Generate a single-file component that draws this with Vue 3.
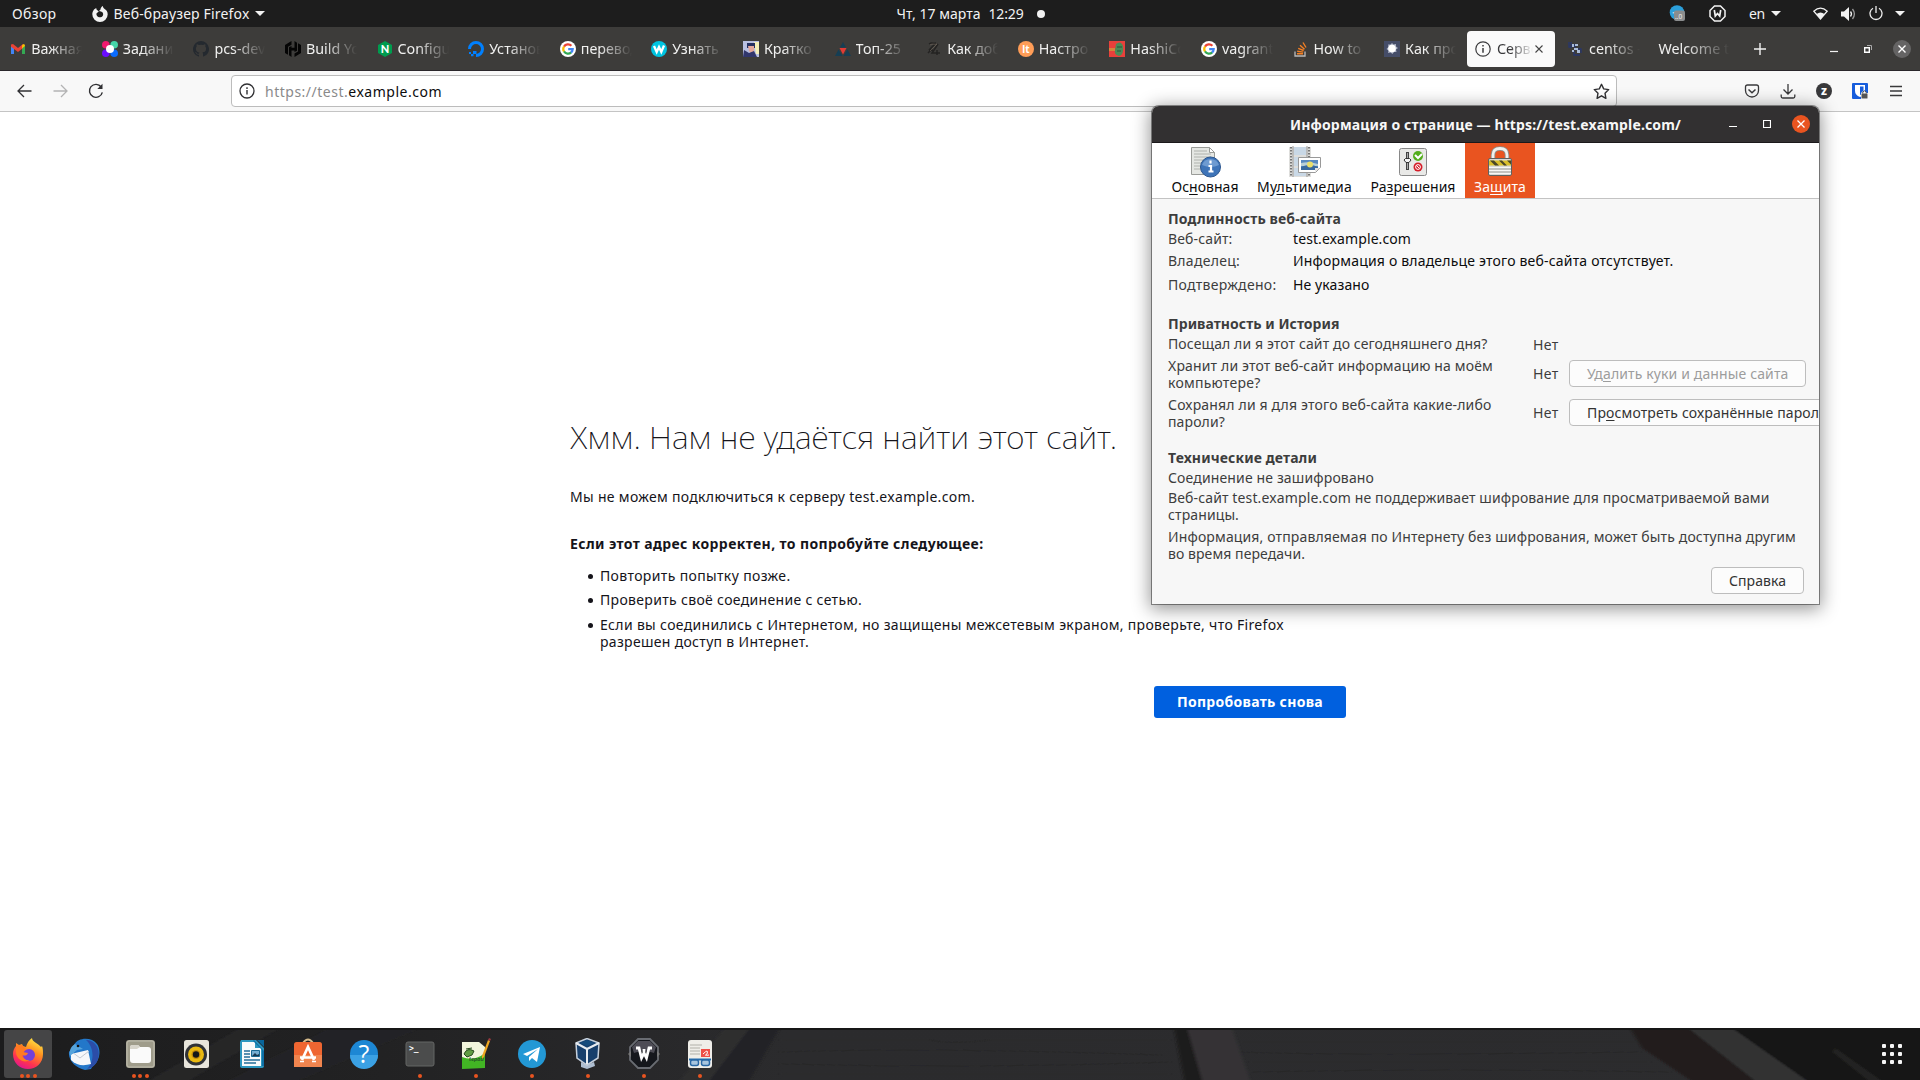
<script setup>
// Stretches or tightens a label's tracking so that it takes the given width.
const vFit = {
  mounted(el, { value }) {
    const natural = el.getBoundingClientRect().width
    const count = el.textContent.length
    if (value && count > 1) el.style.letterSpacing = (value - natural) / count + 'px'
  },
}

const google = `<circle cx="8" cy="8" r="8" fill="#fff"/><g fill="none" stroke-width="2.2"><path d="M4 5.6A4.7 4.7 0 0 1 11.400 4.700" stroke="#ea4335"/><path d="M4 5.500A4.700 4.700 0 0 0 4 10.500" stroke="#fbbc05"/><path d="M4 10.400A4.700 4.700 0 0 0 11.200 11.400" stroke="#34a853"/><path d="M11 11.500A4.700 4.700 0 0 0 12.700 8.100H8.200" stroke="#4285f4"/></g>`

const tabs = [
  { t: 'Важная', i: `<path d="M1 4v9h3V6z" fill="#4285f4"/><path d="M12 6v7h3V4z" fill="#34a853"/><path d="M1 3.500 3 3l5 4 5-4v4L8 11 1 5.800z" fill="#ea4335"/><path d="M12 4.200 13.500 3Q15 3 15 5l-3 2.500z" fill="#fbbc04"/>` },
  { t: 'Задани', i: `<circle cx="3.800" cy="3.800" r="3.800" fill="#f0196e"/><circle cx="12.200" cy="3.800" r="3.800" fill="#45d6a8"/><circle cx="3.800" cy="12.200" r="3.800" fill="#6a0dff"/><circle cx="12.200" cy="12.200" r="3.800" fill="#0a6cff"/><circle cx="8" cy="8" r="4" fill="#fff"/>` },
  { t: 'pcs-dev', i: `<path d="M8 0a8 8 0 0 0-2.500 15.600c.4.100.5-.2.500-.4v-1.500c-2.200.5-2.700-.9-2.700-.9-.4-.9-.9-1.200-.9-1.200-.7-.5.100-.5.100-.5.800.1 1.200.8 1.200.8.700 1.200 1.900.9 2.300.7.100-.5.300-.9.500-1.100-1.800-.2-3.600-.9-3.600-4 0-.9.300-1.600.8-2.100-.1-.2-.4-1 .1-2.100 0 0 .7-.2 2.200.8a7.600 7.600 0 0 1 4 0c1.500-1 2.200-.8 2.200-.8.500 1.100.2 1.900.1 2.100.500.500.800 1.200.800 2.100 0 3.100-1.900 3.700-3.700 3.900.300.300.600.800.600 1.500v2.300c0 .2.100.5.500.4A8 8 0 0 0 8 0z" fill="#24292f"/>` },
  { t: 'Build Yo', i: `<path d="M6.500 0 0 4v8l3 1.800V5.700l3.500-2zM9.500 0v6.700h-3V5L4 6.300v8L6.500 16V9.500h3V11l2.500-1.300v-8zM13 2.200v8.200l-3.500 2V16L16 12V4z" fill="#050505"/>` },
  { t: 'Configu', i: `<path d="M8 0 15 4v8l-7 4-7-4V4z" fill="#009c4f"/><text x="8" y="12" text-anchor="middle" font-family="Lato" font-weight="900" font-size="11" fill="#fff">N</text>` },
  { t: 'Установ', i: `<path d="M1.500 8A6.500 6.500 0 1 1 8 14.500" fill="none" stroke="#0080ff" stroke-width="3"/><path d="M5 10h3.500v3H5zM3 13h2.500v2.300H3zM1 11h2v2H1z" fill="#0080ff"/>` },
  { t: 'перевод', i: google },
  { t: 'Узнать', i: `<circle cx="8" cy="8" r="8" fill="#00c4e0"/><path d="m3 5 2.700 6L8 6l2.300 5L13 4.500" fill="none" stroke="#fff" stroke-width="2.300"/>` },
  { t: 'Кратко', i: `<path d="M0 0h16v16H0z" fill="#b8bfe0"/><path d="M11 1h5v12h-3z" fill="#f4eeb7"/><path d="M4 2h8v5H4z" fill="#25305f"/><path d="M5 5h6v6l-2 2-3-3z" fill="#e4a89b"/><path d="M0 16 1 9l5 3 5-2 3 6z" fill="#31366c"/>` },
  { t: 'Топ-25', i: `<path d="m8 1 3 5.500H5zM3.500 8.500 7.500 15H0zM12.500 8.500 16 15H8.500z" fill="#153e54"/><path d="M4.500 7h7L8 13.500z" fill="#e13b35"/>` },
  { t: 'Как доба', i: `<path d="M3 3c3-2 4 0 7-1L3 9c3-1 3 0 4 1M12 3 6 12h8M11 9v5M2 12l3-3" fill="none" stroke="#242322" stroke-width="1.500"/><path d="M4 4c3-2 4 0 7-1L4 10" fill="none" stroke="#776c60" stroke-width=".6"/>` },
  { t: 'Настро', i: `<circle cx="8" cy="8" r="8" fill="#ff9d57"/><text x="8" y="12" text-anchor="middle" font-family="Noto Sans" font-weight="700" font-size="10" fill="#fff">lt</text>` },
  { t: 'HashiCo', i: `<path d="M0 0h16v16H0z" fill="#e9403b"/><path d="M7 3q5-4 7 2 1 9-4 10-5-1-4-6z" fill="#4c8a57"/><path d="M0 7h6v3H0z" fill="#d3853b"/><path d="M8 6h5M8 10h4" stroke="#28523c"/>` },
  { t: 'vagrant', i: google },
  { t: 'How to', i: `<path d="M2 10.500V15h10v-4.500" fill="none" stroke="#bcbbbb" stroke-width="1.300"/><path d="M4 12.800h6M4.200 10.300l6 .8M5.200 7.300l5.500 2.200M7 4.300l4.500 4M10 1.500l3 5" stroke="#f48024" stroke-width="1.400"/>` },
  { t: 'Как про', i: `<path d="M0 0h16v16H0z" fill="#454d68"/><path d="m8 2 1.500 1.500L12 3l0 2.500 2 1.500-2 1.500.5 2.500-2.500 0-1.500 2-2-1.500-2.500.5.500-2.500-2-1.500 2-2L4 3.500l2.500 0z" fill="#aeb4c6"/><circle cx="8" cy="7.500" r="3.800" fill="#fff"/>` },
  { t: 'Сервер', active: true, i: `<circle cx="8" cy="8" r="7.200" fill="none" stroke="#3b3b3d" stroke-width="1.200"/><path d="M8 7v4.800M8 4v1.600" stroke="#3b3b3d" stroke-width="1.500"/>` },
  { t: 'centos -', i: `<path d="M1 1v5h3M3 1v3h4v4M6 10v4h6M9 8h4v4" fill="none" stroke="#27366e" stroke-width="1.300"/><path d="M4 3h2v3H4zM7 3h3v2H7zM6 7h4v2H6zM9 9h3v3H9zM4 9h2v2H4z" fill="#a9bbd8"/>` },
  { t: 'Welcome to' },
]

const apps = [
  { dots: 3, active: true, i: `<defs><linearGradient id="fx" x1=".8" y1="0" x2=".3" y2="1"><stop offset="0" stop-color="#fff04a"/><stop offset=".4" stop-color="#ff8f1f"/><stop offset=".75" stop-color="#ff3350"/><stop offset="1" stop-color="#e01690"/></linearGradient></defs><path d="M16 31C8 31 1 25 1 16c0-3 1-6 3-8V5l3 2 3-1 1 2 3 1c1-4 3-7 6-9 0 4 6 5 9 9l1-1c1 2 1 6 1 8 0 9-7 15-15 15z" fill="url(#fx)"/><circle cx="17" cy="17" r="6" fill="#7440d8"/><path d="M4 8l6-1 4 4-3 3 5 1c-1 3-4 3-6 2 1 4 5 6 8 5-6 4-14-1-14-8z" fill="#ff7a22"/>` },
  { dots: 0, i: `<path d="M6 7C10-1 24-1 29 6c5 7 2 18-5 23l-1 2-6 1C8 30 0 23 1 14z" fill="#2377c9"/><path d="M18 2c9 0 15 9 12 19-1 5-6 9-11 10 7-6 8-21-1-29z" fill="#2b4da8"/><path d="m3 16 17-4 3 14c-7 2-14 2-20-4z" fill="#f5f7fa"/><path d="m4 14 8 6 9-7" fill="none" stroke="#c3c9d2"/><path d="M7 6C2 9 1 14 2 18l7-6 6-1z" fill="#55a4dd"/><circle cx="10" cy="8" r="1.300" fill="#111"/>` },
  { dots: 3, i: `<rect x="2" y="2" width="29" height="28" rx="3" fill="#9f9c8b"/><rect x="3" y="3" width="27" height="26" rx="2" fill="none" stroke="#c0beb0"/><path d="M6 10q0-3 3-3h5l2 2h8q3 0 3 3v10q0 3-3 3H9q-3 0-3-3z" fill="#fafafa"/><path d="M6 11V9q0-2 2-2h6l2 2-3 2z" fill="#d8d5cc"/>` },
  { dots: 0, i: `<rect x="4" y="2" width="25" height="28" rx="2.500" fill="#e8e5dc"/><circle cx="16" cy="16.500" r="11" fill="#303236"/><circle cx="16" cy="16.500" r="8" fill="#eab911"/><circle cx="16" cy="16.500" r="4.500" fill="#c58c0b"/><circle cx="16" cy="16.500" r="3.200" fill="#15171a"/>` },
  { dots: 0, i: `<path d="M5 2h15l8 8v18q0 2-2 2H6q-2 0-2-2V4z" fill="#2c96bf"/><path d="M6 4h13v6h6v18H6z" fill="#f8fafb"/><path d="M21 2h7v7z" fill="#09659a"/><path d="m18 2 10 11v15H26V12L17 3z" fill="#0e6fa5"/><path d="M8 13h6M8 16h6M8 19h6M8 22h16M8 25h12" stroke="#236e99" stroke-width="1.300"/><path d="M15.500 12.500h8v6h-8z" fill="#74acd0" stroke="#176792"/><path d="m16 18 3-3 2 2 2-1v2z" fill="#17374f"/>` },
  { dots: 0, i: `<path d="M11 7V5q5-7 10 0v2" fill="none" stroke="#d7bc8c" stroke-width="2"/><rect x="2" y="4" width="28" height="25" rx="2.500" fill="#ef6631"/><path d="M2 17h28v12H2z" fill="#f1854f"/><path d="m10 22 6-13 6 13M8 19.500h16" fill="none" stroke="#fff" stroke-width="2.700"/><path d="M8 23.500h4M20 23.500h4" stroke="#fff" stroke-width="1.500"/>` },
  { dots: 0, i: `<circle cx="16" cy="16" r="14" fill="#1d87d4"/><path d="M2 17h28a14 14 0 0 1-28 0z" fill="#3ba1e4"/><text x="16" y="25" text-anchor="middle" font-family="Open Sans" font-size="25" fill="#fff">?</text>` },
  { dots: 1, i: `<rect x="2" y="4" width="28" height="24" rx="2" fill="#4b4c4c" stroke="#656665" stroke-width="1"/><text x="5" y="13" font-family="DejaVu Sans Mono" font-size="8" font-weight="700" fill="#fff">&gt;_</text>` },
  { dots: 1, i: `<path d="M2 4h17l6 5v21H2z" fill="#f2f5dc"/><path d="M2 19q12 5 23-4v15L2 31z" fill="#42b524"/><path d="M4 16q3-7 10-3l-2 4-5 2zM6 11l6-1" fill="#619d43" stroke="#254a1d"/><text x="9" y="23" font-size="6" font-family="Lato" font-style="italic" font-weight="700" fill="#245525">tepad</text><path d="m22 18 6-16 2 1-6 16-2 2z" fill="#efa620"/><path d="m28 2 1-2 2 1-1 2z" fill="#9f3b40"/>` },
  { dots: 1, i: `<circle cx="16" cy="16" r="14" fill="#2398d5"/><path d="m7 16 17-7-3 15-5-4-3 3v-4l9-8-11 7z" fill="#fff"/>` },
  { dots: 1, i: `<path d="m9 24 6 3 7-3 1 4-8 3-6-2z" fill="#aebed1"/><path d="m4 5 11-4.500L27 5l-1 15-11 7L5 20z" fill="#173f6c" stroke="#c6d0dc" stroke-width="1.500"/><path d="m4 5 11 6 12-6M15 11v15" fill="none" stroke="#e8ecf0" stroke-width="2"/><path d="M8 5l7-3 8 3-8 3z" fill="#164b7b"/>` },
  { dots: 1, i: `<path d="M10 1h12l8 8v13l-8 8H10l-8-8V9z" fill="#15171c" stroke="#696c72" stroke-width="1.800"/><path d="M10 3h12l6 6-2 6-10-3-10 3-2-6z" fill="#4d4c55"/><path d="M8 10h3l2.500 10L16 15l2.500 5L21 10h3M16 11v4" fill="none" stroke="#fff" stroke-width="2.800"/><path d="m0 16 3-3v6zM32 16l-3-3v6z" fill="#777"/>` },
  { dots: 1, i: `<rect x="4" y="2" width="24" height="28" rx="3" fill="#efeee9"/><path d="M6 7h12M6 10h10M6 13h10M6 16h10" stroke="#b1b0a9"/><path d="M17 11h9v8h-9z" fill="#ee5048"/><path d="M19 16q6-6 4 0-4 2 2 1" fill="none" stroke="#fff"/><path d="M5 21.500h22" stroke="#226cae" stroke-width="2"/><rect x="6.500" y="22" width="8" height="5.500" rx="2" fill="#a7c5df" stroke="#2968a5" stroke-width="1.500"/><rect x="17.500" y="22" width="8" height="5.500" rx="2" fill="#a7c5df" stroke="#2968a5" stroke-width="1.500"/>` },
]
</script>

<template>
  <div class="screen">
    <header class="panel">
      <span v-fit="44.500" class="overview">Обзор</span>
      <svg class="pfx" width="16" height="16" viewBox="0 0 16 16"><path d="M2 3.500C1 5 .3 6.500.3 8.300A7.700 7.700 0 0 0 15.700 8.300C15.700 5.500 14 3.500 12.600 3 11.500 2 10.700 1 11 0 9.500.5 8.500 2 8.500 3.500L7 5l2 .5C12 6 12 11 8.500 11.300 5.500 11.500 4 9.200 4.600 7.300L6.800 5.500 4.500 3.500 4.200 2z" fill="#f2f2f2"/></svg>
      <span v-fit="136" class="appname">Веб-браузер Firefox</span>
      <i class="caret c1"></i>
      <span class="clock"><span v-fit="84">Чт, 17 марта</span><span v-fit="35">12:29</span><i></i></span>
      <div class="status">
        <svg width="17" height="17" viewBox="0 0 17 17"><circle cx="8" cy="7.500" r="7.300" fill="#2b9fda"/><path d="m3 8 5-2v3z" fill="#fff"/><rect x="5" y="5.500" width="11" height="10.500" rx="2" fill="#8b8d8e"/><text x="6" y="13.500" font-family="Noto Sans" font-size="6.500" fill="#eee">..0</text></svg>
        <svg class="s2" width="17" height="17" viewBox="0 0 17 17"><path d="M5.500 1h6l4.500 4.500v6L11.500 16h-6L1 11.500v-6z" fill="none" stroke="#f2f2f2" stroke-width="1.500"/><path d="m5.300 5 1 6L8.500 8.500l2.200 2.500 1-6" fill="none" stroke="#f2f2f2" stroke-width="1.700"/></svg>
        <span v-fit="16" class="lang">en</span><i class="caret c2"></i>
        <svg class="s3" width="15" height="13" viewBox="0 0 15 13"><path d="M.8 4.200Q7.500-2 14.200 4.200L7.500 12z" fill="none" stroke="#f2f2f2" stroke-width="1.300"/><path d="M3.500 7q4-3 8 0l-4 5z" fill="#f2f2f2"/></svg>
        <svg class="s4" width="15" height="14" viewBox="0 0 15 14"><path d="M0 4.500h3L8 0v14L3 9.500H0z" fill="#f2f2f2"/><path d="M9.500 4.500q2 2.500 0 5" fill="none" stroke="#f2f2f2" stroke-width="1.300"/><path d="M11.500 2q3.800 5 0 10" fill="none" stroke="#999" stroke-width="1.300"/></svg>
        <svg class="s5" width="14" height="15" viewBox="0 0 14 15"><path d="M4 2.300a6 6 0 1 0 6 0M7 0v7" fill="none" stroke="#eee" stroke-width="1.300"/></svg>
        <i class="caret c3"></i>
      </div>
    </header>

    <nav class="tabs">
      <div v-for="(tab, n) in tabs" :key="n" class="tab" :class="{ active: tab.active, bare: !tab.i }">
        <svg v-if="tab.i" width="16" height="16" viewBox="0 0 16 16" v-html="tab.i"></svg>
        <span class="label">{{ tab.t }}</span>
        <svg v-if="tab.active" class="x" width="8" height="8" viewBox="0 0 8 8"><path d="m.5.5 7 7m0-7-7 7" stroke="#444" stroke-width="1.100"/></svg>
      </div>
      <svg class="plus" width="12" height="12" viewBox="0 0 12 12"><path d="M6 0v12M0 6h12" stroke="#f2f2f2" stroke-width="1.400"/></svg>
      <div class="winbtns">
        <svg width="8" height="8" viewBox="0 0 8 8"><path d="M0 6.500h8" stroke="#f2f2f2" stroke-width="1.200"/></svg>
        <svg width="8" height="8" viewBox="0 0 8 8"><path d="M.7 2.700h4.600v4.600H.7z" fill="none" stroke="#fff" stroke-width="1.400"/><path d="M3 .5h4.500V5" fill="none" stroke="#aaa"/></svg>
        <svg width="18" height="18" viewBox="0 0 18 18"><circle cx="9" cy="9" r="9" fill="#656464"/><path d="m5.500 5.500 7 7m0-7-7 7" stroke="#fff" stroke-width="1.400"/></svg>
      </div>
    </nav>

    <div class="toolbar">
      <svg class="back" width="15" height="14" viewBox="0 0 15 14"><path d="M14.500 7H1.500M7 1 1 7l6 6" fill="none" stroke="#303033" stroke-width="1.300"/></svg>
      <svg class="fwd" width="15" height="14" viewBox="0 0 15 14"><path d="M.5 7h13M8 1l6 6-6 6" fill="none" stroke="#b3b3b4" stroke-width="1.300"/></svg>
      <svg class="reload" width="16" height="16" viewBox="0 0 16 16"><path d="M13.200 4A6.500 6.500 0 1 0 14.300 9.300" fill="none" stroke="#303033" stroke-width="1.400"/><path d="M14.500.8V6H9.300z" fill="#303033"/></svg>
      <div class="url">
        <svg width="16" height="16" viewBox="0 0 16 16"><circle cx="8" cy="8" r="7" fill="none" stroke="#303033" stroke-width="1.300"/><path d="M8 7v4.500M8 4.300V6" stroke="#303033" stroke-width="1.400"/></svg>
        <span v-fit="177" class="addr"><em>https://test.</em>example.com</span>
        <svg class="star" width="17" height="17" viewBox="0 0 17 17"><path d="m8.500 1.300 2.200 4.600 5 .7L12 10.200l.9 5.100-4.400-2.500-4.400 2.500.9-5.100L1.300 6.600l5-.7z" fill="none" stroke="#303033" stroke-width="1.400" stroke-linejoin="round"/></svg>
      </div>
      <div class="tools">
        <svg width="16" height="16" viewBox="0 0 16 16"><path d="M1.500 4q0-2 2-2h9q2 0 2 2v3.500a6.500 6.500 0 0 1-13 0z" fill="none" stroke="#39393b" stroke-width="1.300"/><path d="m4.500 6.500 3.500 3.300 3.500-3.300" fill="none" stroke="#39393b" stroke-width="1.500"/></svg>
        <svg width="16" height="16" viewBox="0 0 16 16"><path d="M8 1v9.500M3.500 6.500 8 11l4.500-4.500M1.200 11.500v2q0 1.500 1.500 1.500h10.600q1.500 0 1.500-1.500v-2" fill="none" stroke="#39393b" stroke-width="1.300"/></svg>
        <svg width="16" height="16" viewBox="0 0 16 16"><circle cx="8" cy="8" r="8" fill="#39393b"/><text x="8" y="12" text-anchor="middle" font-family="Noto Sans" font-weight="800" font-size="12" fill="#fff">z</text></svg>
        <svg width="16" height="16" viewBox="0 0 16 16"><rect width="16" height="16" rx="1" fill="#175ddc"/><path d="M3 2h10v6q0 4-5 6-5-2-5-6z" fill="#fff"/><path d="M8 3.500h3.500V8q0 2.500-3.500 4z" fill="#175ddc"/><path d="M9 16V10q3-4 6 0h1v6z" fill="#fff"/><rect x="9.500" y="10.500" width="6" height="5" fill="#555"/><path d="M10.800 10.500V9q1.700-2.500 3.400 0v1.500" fill="none" stroke="#555"/></svg>
        <svg width="16" height="16" viewBox="0 0 16 16"><path d="M2 3.500h12M2 8h12M2 12.500h12" stroke="#39393b" stroke-width="1.300"/></svg>
      </div>
    </div>

    <main class="page">
      <h1><span v-fit="547">Хмм. Нам не удаётся найти этот сайт.</span></h1>
      <p class="p1"><span v-fit="405">Мы не можем подключиться к серверу test.example.com.</span></p>
      <p class="p2"><span v-fit="413.5">Если этот адрес корректен, то попробуйте следующее:</span></p>
      <ul>
        <li><span v-fit="190.500">Повторить попытку позже.</span></li>
        <li><span v-fit="262">Проверить своё соединение с сетью.</span></li>
        <li><span v-fit="684">Если вы соединились с Интернетом, но защищены межсетевым экраном, проверьте, что Firefox</span><br><span v-fit="209">разрешен доступ в Интернет.</span></li>
      </ul>
      <button class="retry"><span v-fit="146">Попробовать снова</span></button>
    </main>

    <footer class="dock">
      <svg class="wood" width="1920" height="52" viewBox="0 0 1920 52" preserveAspectRatio="none">
        <defs>
          <linearGradient id="wd" x1="0" x2="1"><stop offset="0" stop-color="#1c1c1d"/><stop offset=".2" stop-color="#222223"/><stop offset=".36" stop-color="#29292b"/><stop offset=".41" stop-color="#2b2b2d"/><stop offset="1" stop-color="#2c2c2e"/></linearGradient>
          <filter id="soft" x="-5%" y="-20%" width="110%" height="140%"><feGaussianBlur stdDeviation="1.600 .6"/></filter>
        </defs>
        <path d="M0 0h1920v52H0z" fill="url(#wd)"/>
        <g filter="url(#soft)">
          <path d="M150 52 240 0h40L190 52z" fill="#252527"/><path d="M230 52 330 0h90L300 52z" fill="#242426"/>
          <path d="M680 52 725 0h25L710 52z" fill="#2d2d2f"/><path d="M710 52 750 0h30L750 52z" fill="#242425"/>
          <g stroke="#282829" fill="none"><path d="M780 12h150q20 5 60 0h180M780 24q150-5 380 3M780 36q200 5 390-2M780 46h390M1240 14h400M1240 24q100 4 400 0M1250 34h400M1250 44q200-4 420 0"/></g>
          <path d="M1174 0h14l14 52h-18z" fill="#1f1d1c"/><path d="M1187 0h45l18 52h-48z" fill="#343335"/>
          <path d="M1630 0h60l70 52h-70L1642 20z" fill="#211f1d"/><path d="M1688 0h44l74 52h-52z" fill="#313132"/><path d="M1732 0h198v52H1806z" fill="#181817"/><path d="M1835 20 1880 52h-12l-35-28z" fill="#222221"/>
        </g>
        <path d="M0 0h1920v2H0z" fill="#171717"/>
      </svg>
      <div class="apps">
        <div v-for="(app, n) in apps" :key="n" class="app" :class="{ on: app.active }">
          <svg width="32" height="32" viewBox="0 0 32 32" v-html="app.i"></svg>
          <span class="dots"><i v-for="d in app.dots" :key="d"></i></span>
        </div>
      </div>
      <div class="grid"><i v-for="n in 9" :key="n"></i></div>
    </footer>

    <section class="dialog">
      <div class="title">
        <span v-fit="391">Информация о странице — https://test.example.com/</span>
        <div class="dbtns">
          <svg width="8" height="8" viewBox="0 0 8 8"><path d="M0 6.500h8" stroke="#fff" stroke-width="1.200"/></svg>
          <svg width="8" height="8" viewBox="0 0 8 8"><path d="M.5.5h7v7h-7z" fill="none" stroke="#fff" stroke-width="1.200"/></svg>
          <svg width="18" height="18" viewBox="0 0 18 18"><circle cx="9" cy="9" r="9" fill="#e95420"/><path d="m5.500 5.500 7 7m0-7-7 7" stroke="#fff" stroke-width="1.300"/></svg>
        </div>
      </div>
      <div class="dtabs">
        <div class="dtab d1">
          <svg width="32" height="32" viewBox="0 0 32 32"><path d="M2.500 1.500h18l5 5v22h-23z" fill="#e5e7e3" stroke="#9a9c98"/><path d="M20.500 1.500v5h5z" fill="#fff" stroke="#9a9c98"/><path d="M5 5h13M5 8h17M5 11h17M5 14h15M5 17h10M5 20h8M5 23h8" stroke="#afb2ad"/><circle cx="21.500" cy="21" r="10" fill="#3e74b8" stroke="#2b568f"/><path d="M13 19a9 9 0 0 1 17 0q-8 4-17 0z" fill="#6e9bd1"/><path d="M21.500 17.500v-3M19.500 20h2.500v5.500M19.500 25.500h5" fill="none" stroke="#fff" stroke-width="2.200"/></svg>
          <span v-fit="67">Ос<u>н</u>овная</span>
        </div>
        <div class="dtab d2">
          <svg width="32" height="32" viewBox="0 0 32 32"><path d="M0 1h22v30H0z" fill="#dededc"/><path d="M5 1h12v8H5zM5 11h12v9H5zM5 22h12v8H5z" fill="#c9d8e6"/><path d="M2 1v30M20 1v30" stroke="#777" stroke-width="2" stroke-dasharray="1.500 1.500"/><path d="M4 0v31M18 0v31" stroke="#999"/><path d="M9.500 11.500h22v10l-5 5h-17z" fill="#fff" stroke="#999"/><path d="M12 14h17v8l-2 2H12z" fill="#5789c0"/><path d="M12 17q8-2 17 1v2H12z" fill="#b9d0d6"/><path d="M12 21q9-4 17 0v1l-2 2H12z" fill="#38699e"/><circle cx="21" cy="18.500" r="3" fill="#eadf6b"/><path d="m31 22-5 4v-4z" fill="#e2e2e2"/></svg>
          <span v-fit="95">Му<u>л</u>ьтимедиа</span>
        </div>
        <div class="dtab d3">
          <svg width="32" height="32" viewBox="0 0 32 32"><rect x="2.500" y="2.500" width="27" height="27" rx="2" fill="#e9e9e7" stroke="#888"/><path d="M10.500 6v18" stroke="#444" stroke-width="3"/><path d="M10.500 7v16" stroke="#aaa"/><path d="m7 14 1.500-1.500h4L14 14l-2 2.500H9z" fill="#f5f5f5" stroke="#333"/><circle cx="21" cy="10" r="5" fill="#53ad1c"/><path d="m18 9 3 3 4-4" fill="none" stroke="#fff" stroke-width="2"/><circle cx="21" cy="21" r="4.500" fill="#d51d29"/><circle cx="21" cy="21" r="2.400" fill="none" stroke="#fff"/><path d="m19.500 19.500 3 3" stroke="#fff"/></svg>
          <span v-fit="85">Ра<u>з</u>решения</span>
        </div>
        <div class="dtab d4 on">
          <svg width="32" height="32" viewBox="0 0 32 32"><path d="M9 14v-5q0-6.500 7-6.500T23 9v5" fill="none" stroke="#8d8d89" stroke-width="4.500"/><path d="M9 14v-5q0-6.500 7-6.500T23 9v5" fill="none" stroke="#f1f1ed" stroke-width="2.800"/><rect x="4.500" y="12.500" width="23" height="17" rx="1.500" fill="#d9d9d5" stroke="#61615e"/><path d="M5 14.500h22v5H5z" fill="#d9bf2a"/><path d="m6 14.500 5 5h4l-5-5zM15 14.500l5 5h3l-5-5zM23 14.500l4 4v-4z" fill="#4a4726"/><path d="M5 21.500h22M5 24.500h22M5 27.500h22" stroke="#f7f7f5"/><path d="M5 23h22M5 26h22" stroke="#adada9"/></svg>
          <span v-fit="52">За<u>щ</u>ита</span>
        </div>
      </div>
      <div class="dbody">
        <h2><span v-fit="173">Подлинность веб-сайта</span></h2>
        <dl>
          <dt><span v-fit="64.500">Веб-сайт:</span></dt><dd><span v-fit="118">test.example.com</span></dd>
          <dt><span v-fit="72">Владелец:</span></dt><dd><span v-fit="380.500">Информация о владельце этого веб-сайта отсутствует.</span></dd>
          <dt><span v-fit="108.500">Подтверждено:</span></dt><dd><span v-fit="76.500">Не указано</span></dd>
        </dl>
        <h2 class="h2b"><span v-fit="171.500">Приватность и История</span></h2>
        <div class="q q1"><div class="qt"><span v-fit="319.500">Посещал ли я этот сайт до сегодняшнего дня?</span></div><span v-fit="25.500" class="no">Нет</span></div>
        <div class="q q2"><div class="qt"><span v-fit="325">Хранит ли этот веб-сайт информацию на моём</span><br><span v-fit="92.500">компьютере?</span></div><div class="qa"><span v-fit="25.500" class="no">Нет</span><button class="btn b1 off"><span v-fit="201.500">Уд<u>а</u>лить куки и данные сайта</span></button></div></div>
        <div class="q q3"><div class="qt"><span v-fit="323.500">Сохранял ли я для этого веб-сайта какие-либо</span><br><span v-fit="57">пароли?</span></div><div class="qa"><span v-fit="25.500" class="no">Нет</span><button class="btn b2"><span v-fit="241">Пр<u>о</u>смотреть сохранённые пароли</span></button></div></div>
        <h2><span v-fit="149">Технические детали</span></h2>
        <p class="t1"><span v-fit="206">Соединение не зашифровано</span></p>
        <p class="t2"><span v-fit="601.500">Веб-сайт test.example.com не поддерживает шифрование для просматриваемой вами</span><br><span v-fit="71">страницы.</span></p>
        <p class="t3"><span v-fit="628">Информация, отправляемая по Интернету без шифрования, может быть доступна другим</span><br><span v-fit="137">во время передачи.</span></p>
        <div class="help"><button class="btn"><span v-fit="57">Справка</span></button></div>
      </div>
    </section>
  </div>
</template>

<style>
body { margin: 0; overflow: hidden; background: #fff; }
</style>

<style scoped>
.screen { position: relative; display: flex; flex-direction: column; width: 1920px; height: 1080px; overflow: hidden; background: #fff; font: 14px/17px "Noto Sans", "Open Sans", sans-serif; white-space: nowrap; }
.screen * { box-sizing: border-box; }
.screen svg { display: block; flex: none; }
span { display: inline-block; flex: none; }
h1, h2, p, ul, dl, dd { margin: 0; padding: 0; }
button { font: inherit; }
u { text-underline-offset: 2px; text-decoration-thickness: 1px; }

.panel { display: flex; align-items: center; flex: none; height: 27px; padding-left: 12px; background: #1d1d1d; color: #f2f2f2; }
.pfx { margin: 0 6px 0 35px; }
.caret { flex: none; border: 5px solid transparent; border-top-color: #f2f2f2; border-bottom: 0; }
.c1 { margin-left: 5px; }
.clock { display: flex; align-items: center; gap: 8px; margin-left: 632px; }
.clock i { width: 8px; height: 8px; margin-left: 5px; border-radius: 50%; background: #f2f2f2; }
.status { display: flex; align-items: center; margin: 0 15px 0 auto; }
.s2 { margin-left: 23px; }
.lang { margin-left: 23px; }
.c2 { margin-left: 6px; }
.s3 { margin-left: 32px; }
.s4 { margin-left: 13px; }
.s5 { margin-left: 13px; }
.c3 { margin-left: 12px; }

.tabs { display: flex; align-items: center; flex: none; height: 44px; border-bottom: 1px solid #2a272b; background: #3d3c3a; color: #f0f0ef; }
.tab { display: flex; align-items: center; flex: none; width: 91.600px; height: 36px; padding-left: 10.200px; }
.label { flex: none; width: 52px; margin-left: 5px; overflow: hidden; font-size: 14.300px; line-height: 22px; -webkit-mask-image: linear-gradient(90deg, #000 36%, transparent 98%); mask-image: linear-gradient(90deg, #000 36%, transparent 98%); }
.bare { padding-left: 9px; }
.bare .label { width: 73px; margin: 0; }
.tab.active { width: 88px; margin: 0 3px 0 1.400px; padding-left: 8px; border-radius: 4px; background: #fafafa; color: #39393b; }
.active .label { width: 37px; margin-left: 6px; }
.active .x { margin-left: 1px; }
.plus { margin-left: 12.500px; }
.winbtns { display: flex; align-items: center; margin: 0 9px 0 auto; gap: 26px; }
.winbtns svg:last-child { margin-left: -5px; }

.toolbar { display: flex; align-items: center; flex: none; height: 41px; padding-left: 17px; border-bottom: 1px solid #c4c4c4; background: #f8f8f8; }
.fwd { margin-left: 21px; }
.reload { margin-left: 20px; }
.url { display: flex; align-items: center; width: 1386px; height: 32px; margin-left: 127px; padding: 0 7px; border: 1px solid #bcbcbc; border-radius: 4px; background: #fff; }
.addr { margin-left: 10px; color: #0c0c0d; }
.addr em { font-style: normal; color: #8a8a8b; }
.star { margin: 0 -1px 0 auto; }
.tools { display: flex; gap: 20px; margin: 0 16px 0 auto; }

.page { display: flex; flex-direction: column; flex: 1; padding-left: 570px; color: #15141a; }
h1 { margin-top: 306px; font-size: 32px; line-height: 38px; font-weight: 200; }
.p1 { margin-top: 32px; }
.p2 { margin-top: 30px; font-weight: 700; }
ul { margin-top: 15px; padding-left: 30px; }
li { margin-bottom: 7px; list-style: none; }
li:nth-child(2) { margin-bottom: 8px; }
li::before { content: ""; float: left; width: 5px; height: 5px; margin: 7px 0 0 -12px; border-radius: 50%; background: #15141a; }
li span { vertical-align: top; }
.retry { width: 192px; height: 32px; margin: 28.500px 0 0 584px; padding: 0; border: 0; border-radius: 3px; background: #0060df; color: #fff; font-weight: 700; }

.dock { position: relative; display: flex; align-items: center; justify-content: space-between; flex: none; height: 52px; }
.wood { position: absolute; inset: 0; }
.apps { position: relative; display: flex; gap: 8px; margin-left: 4px; }
.app { display: flex; flex-direction: column; align-items: center; width: 48px; height: 48px; padding-top: 8px; border-radius: 3px; }
.app.on { background: #454546; }
.dots { display: flex; gap: 2.500px; margin-top: 4px; }
.dots i { width: 4px; height: 4px; border-radius: 50%; background: #e95420; }
.grid { position: relative; display: grid; grid-template-columns: repeat(3, 4px); gap: 4px; margin-right: 18px; }
.grid i { height: 4px; border-radius: 1px; background: #f5f5f5; }

.dialog { position: absolute; left: 1152px; top: 106px; display: flex; flex-direction: column; width: 667px; height: 498px; overflow: hidden; border-radius: 7px 7px 0 0; background: #f7f7f7; color: #3d3d3d; box-shadow: 0 0 0 1px rgba(0,0,0,.4), 0 3px 18px 2px rgba(0,0,0,.42); }
.title { display: flex; align-items: center; flex: none; height: 37px; padding-left: 138px; border-bottom: 1px solid #1b191b; background: #323031; color: #f7f7f7; font-weight: 700; }
.dbtns { display: flex; align-items: center; gap: 26px; margin: 0 9px 0 auto; }
.dbtns svg:last-child { margin-left: -5px; }
.dtabs { display: flex; flex: none; height: 56px; padding-left: 10px; border-bottom: 1px solid #c3c3c3; background: #fff; color: #0c0c0d; }
.dtab { display: flex; flex-direction: column; align-items: center; flex: none; padding-top: 3px; }
.d1 { width: 86px; }
.d2 { width: 113px; }
.d3 { width: 104px; }
.d4 { width: 70px; }
.dtab span { line-height: 17px; }
.dtab.on { background: #e95420; color: #fff; }
.dbody { flex: 1; padding: 11px 0 0 16px; }
.dbody span { vertical-align: top; }
h2 { margin-bottom: 3px; font-size: 14px; line-height: 17px; }
dl { display: grid; grid-template-columns: 125px auto; grid-template-rows: 22px 24px 39px; }
dd { color: #0c0c0d; }
.q { display: flex; align-items: flex-start; height: 34px; }
.qt { flex: none; width: 365px; }
.qa { display: flex; align-items: center; margin-top: 3px; }
.q1 { height: 17px; margin-bottom: 5px; }
.q2 { margin-bottom: 5px; }
.q3 { margin-bottom: 19px; }
.q1 .no { margin-top: 1px; }
.btn { flex: none; display: flex; align-items: center; height: 27px; padding: 0 17px; border: 1px solid #bdbdbd; border-radius: 4px; background: #fcfcfc; color: #333; }
.q .btn { margin-left: 10.500px; }
.b1 { width: 237px; }
.b2 { width: 280px; }
.off { color: #9d9d9d; }
.t1 { margin-bottom: 3px; }
.t2 { margin-bottom: 5px; }
.help { display: flex; justify-content: flex-end; margin: 5px 15px 0 0; }
.help .btn { width: 93px; justify-content: center; }
</style>
